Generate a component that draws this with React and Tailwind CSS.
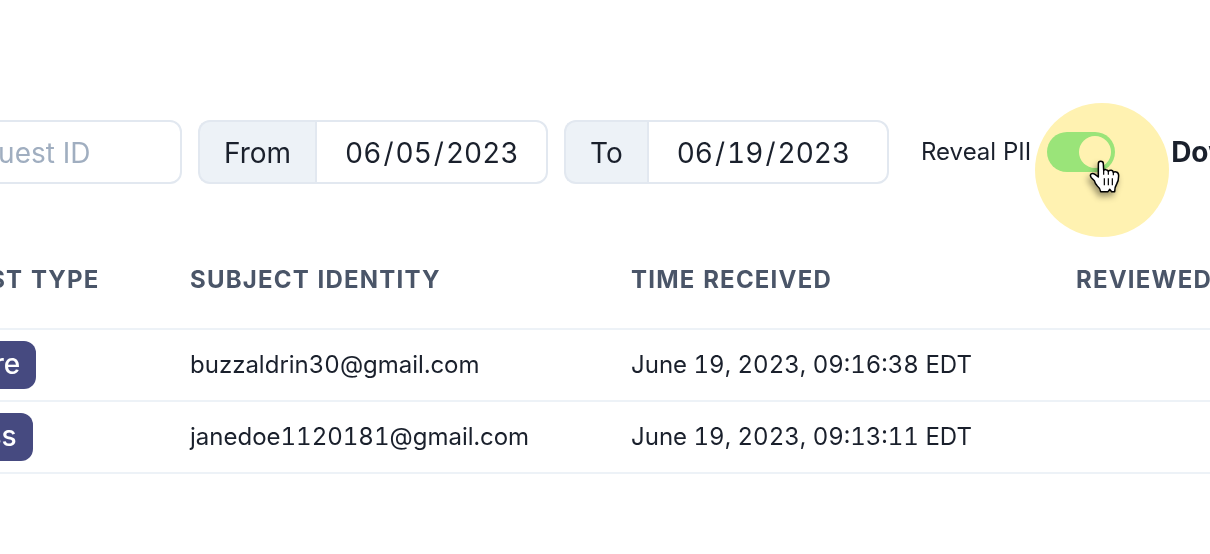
import { useState } from "react";

const rows = [
  { type: "Erasure", identity: "buzzaldrin30@gmail.com", received: "June 19, 2023, 09:16:38 EDT" },
  { type: "Access", identity: "janedoe1120181@gmail.com", received: "June 19, 2023, 09:13:11 EDT" },
];

function DateField({ id, label, value, className }) {
  const [date, setDate] = useState(value);
  return (
    <div className={`flex h-16 shrink-0 text-[28px] ${className}`}>
      <label
        htmlFor={id}
        className="flex items-center rounded-l-xl border-2 border-r-0 border-[#e2e8f0] bg-[#edf2f7] px-6 pt-0.5"
      >
        {label}
      </label>
      <input
        id={id}
        type="date"
        value={date}
        onChange={(e) => setDate(e.target.value)}
        className="min-w-0 flex-1 rounded-r-xl border-2 border-[#e2e8f0] bg-white px-[26px] pt-0.5 tabular-nums outline-none [&::-webkit-calendar-picker-indicator]:hidden [&::-webkit-datetime-edit-day-field]:px-0.5 [&::-webkit-datetime-edit-month-field]:px-0.5 [&::-webkit-datetime-edit-year-field]:px-0.5"
      />
    </div>
  );
}

function Pointer() {
  return (
    <svg
      viewBox="57 87 96 102"
      className="absolute left-[54px] top-[56px] h-[34px] w-8 overflow-visible drop-shadow-[-2px_4px_3px_rgba(0,0,0,0.4)]"
      aria-hidden="true"
    >
      <path
        d="M85 141 L85 101 Q85 94 92 94 Q100 94 100 101 L101 121 Q103 118 108 119 Q114 120 115 124 Q119 120 124 121 Q129 122 130 127 Q134 124 139 126 Q146 128 146 137 Q146 152 140 162 Q134 171 134 185 L125 185 L119 178 L114 185 L92 185 Q90 174 82 168 Q75 161 73 152 L64 143 Q59 137 63 132 Q68 128 76 134 Z"
        fill="#fff"
        stroke="#000"
        strokeWidth="4.5"
        strokeLinejoin="round"
      />
      <path
        d="M101 119 V134 M115 123 V134 M130 126 V136 M103 145 V166 M115 145 V166 M127 145 V166"
        fill="none"
        stroke="#000"
        strokeWidth="3.6"
      />
    </svg>
  );
}

function RevealSwitch() {
  const [on, setOn] = useState(true);
  return (
    <div className="relative h-10 w-[68px] shrink-0">
      <input
        id="reveal"
        type="checkbox"
        role="switch"
        checked={on}
        onChange={(e) => setOn(e.target.checked)}
        className="block h-10 w-[68px] appearance-none rounded-full bg-[#cbd5e0] p-1 before:block before:size-8 before:rounded-full before:bg-white checked:bg-[#9af1ae] checked:before:translate-x-7"
      />
      <div className="pointer-events-none absolute -left-3 -top-[29px] size-[134px] rounded-full bg-[#fff2b1] mix-blend-multiply" />
      <div className="pointer-events-none absolute -left-3 -top-[29px] size-[134px]">
        <Pointer />
      </div>
    </div>
  );
}

export default function App() {
  return (
    <main className="min-h-screen overflow-hidden bg-white font-['Inter',sans-serif] text-[#1a202c]">
      <div className="-ml-[146px] pt-[120px]">
        <div className="flex items-center pl-[67px]">
          <input
            aria-label="Request ID"
            placeholder="Request ID"
            className="mr-4 h-16 w-[261px] shrink-0 rounded-xl border-2 border-[#e2e8f0] px-6 pt-0.5 text-[28px] outline-none placeholder:text-[#a0aec0]"
          />
          <DateField id="from" label="From" value="2023-06-05" className="mr-4 w-[350px]" />
          <DateField id="to" label="To" value="2023-06-19" className="mr-8 w-[325px]" />
          <label htmlFor="reveal" className="mr-4 shrink-0 whitespace-nowrap text-2xl">
            Reveal PII
          </label>
          <RevealSwitch />
          <button className="ml-14 shrink-0 text-[28px] font-bold">Download</button>
        </div>

        <table className="mt-[47px] w-full table-fixed whitespace-nowrap text-left text-2xl tabular-nums">
          <colgroup>
            <col className="w-[288px]" />
            <col className="w-[441px]" />
            <col className="w-[445px]" />
            <col />
          </colgroup>
          <thead>
            <tr className="h-[98px] border-b-2 border-[#edf2f7] uppercase tracking-wider text-[#4a5568]">
              <th className="pl-12">Request type</th>
              <th className="pl-12">Subject identity</th>
              <th className="pl-12">Time received</th>
              <th className="pl-12">Reviewed</th>
            </tr>
          </thead>
          <tbody>
            {rows.map((row) => (
              <tr key={row.identity} className="h-[72px] border-b-2 border-[#edf2f7]">
                <td className="pl-12">
                  <span className="flex h-12 w-fit items-center rounded-xl bg-[#464a80] px-4 text-[28px] font-medium text-white">
                    {row.type}
                  </span>
                </td>
                <td className="pl-12">{row.identity}</td>
                <td className="pl-12">{row.received}</td>
                <td />
              </tr>
            ))}
          </tbody>
        </table>
      </div>
    </main>
  );
}
